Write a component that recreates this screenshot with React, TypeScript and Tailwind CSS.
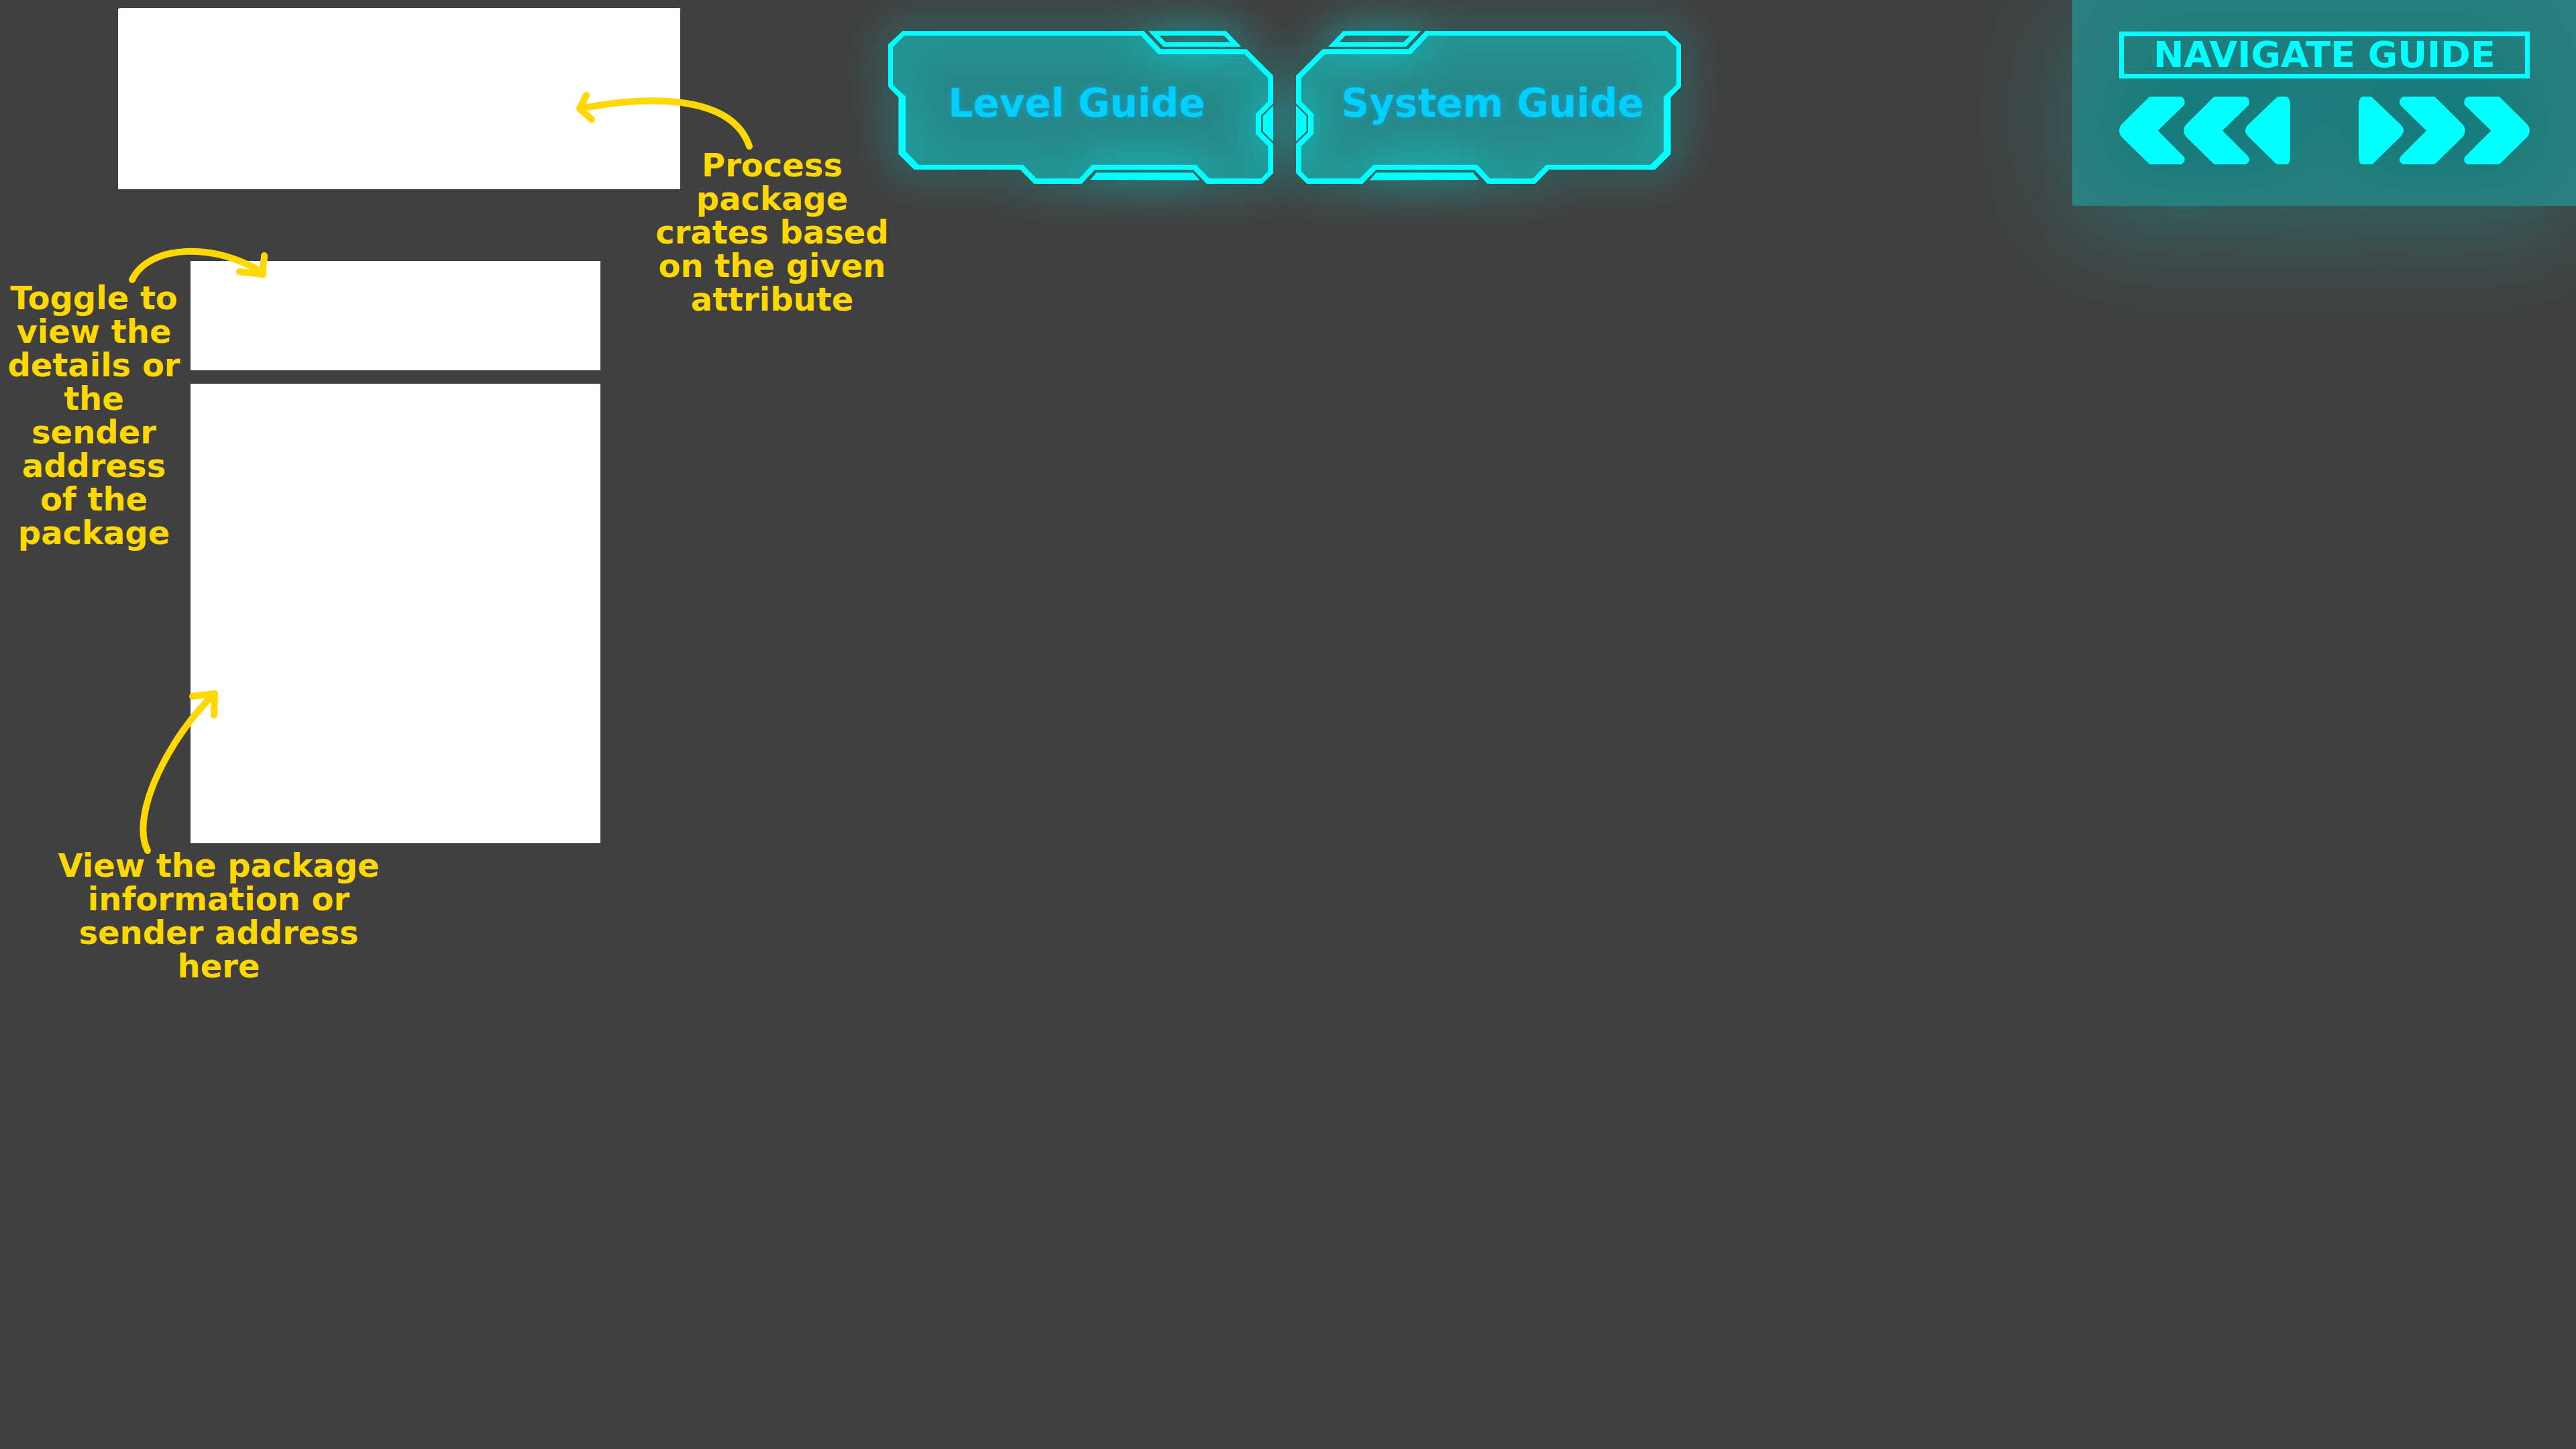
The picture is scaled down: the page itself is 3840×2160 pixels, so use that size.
import React from 'react';

const FONT = "font-['DejaVu_Sans',sans-serif] font-bold";

function Note({ lines, className }: { lines: string[]; className: string }) {
  return (
    <p className={`text-center text-[48px] leading-[50px] text-[#ffd800] ${className}`}>
      {lines.map((line) => (
        <span key={line} className="block whitespace-nowrap">
          {line}{' '}
        </span>
      ))}
    </p>
  );
}

function Arrow({ d, className, viewBox }: { d: string; className: string; viewBox: string }) {
  return (
    <svg
      aria-hidden="true"
      viewBox={viewBox}
      className={`pointer-events-none absolute overflow-visible ${className}`}
      fill="none"
      stroke="#ffd800"
      strokeWidth="10"
      strokeLinecap="round"
      strokeLinejoin="round"
    >
      <path d={d} />
    </svg>
  );
}

const OUTER =
  'M160 137H1040L1103 219H1416L1513 338V461L1469 515V590L1513 642V773L1473 821H1270L1221 759H861L814 821H640L589 757H202L145 688V435L107 387V198Z';
const INNER =
  'M166 159H1030L1094 242H1408L1494 348V452L1449 508V598L1494 654V765L1469 797H1280L1231 736H851L805 797H648L600 736H219L171 677V431L124 379V210Z';

function Frame({ mirrored }: { mirrored?: boolean }) {
  return (
    <span aria-hidden="true" className={`absolute inset-0 ${mirrored ? '-scale-x-100' : ''}`}>
      <svg viewBox="107 137 1406 684" preserveAspectRatio="none" className="absolute inset-0 size-full">
        <path d={OUTER} fill="#00ffff" fillOpacity="0.38" />
      </svg>
      <svg
        viewBox="107 137 1406 684"
        preserveAspectRatio="none"
        className="absolute inset-0 size-full overflow-visible drop-shadow-[0_0_32px_#00ffff]"
        fill="#00ffff"
        fillRule="evenodd"
      >
        <path d={OUTER + INNER} />
        <path d="M1057 138H1341L1396 208H1112ZM1097 159H1333L1356 188H1121Z" />
        <path d="M1513 471L1475 518V586L1513 632Z" />
        <path d="M867 771H1220L1245 805L845 803Z" />
      </svg>
    </span>
  );
}

function GuideButton({ label, mirrored }: { label: string; mirrored?: boolean }) {
  return (
    <button
      type="button"
      className={`relative flex h-[228px] w-[574px] items-center justify-center pb-[12px] ${mirrored ? 'pl-[12px]' : 'pr-[12px]'}`}
    >
      <Frame mirrored={mirrored} />
      <span className="relative text-[58px] leading-[60px] whitespace-nowrap text-[#00cfff] [text-shadow:0_0_8px_#00b4ff99]">
        {label}
      </span>
    </button>
  );
}

const CHEVRON =
  'M220 432H320Q331 440 331 460Q331 467 326 474L246 585L326 698Q331 705 331 713Q331 728 320 736H220L133 615Q124 602 124 585Q124 568 133 555Z';

function NavButton({ label, forward }: { label: string; forward?: boolean }) {
  return (
    <button type="button" aria-label={label} className={forward ? '-scale-x-100' : ''}>
      <svg viewBox="124 432 540 304" preserveAspectRatio="none" className="h-[101px] w-[255px]" fill="#00ffff">
        <path d={CHEVRON} />
        <path d={CHEVRON} transform="translate(204 0)" />
        <path d="M624 432H653Q664 442 664 465V704Q664 728 656 736H621L532 612Q522 598 522 585Q522 572 532 557Z" />
      </svg>
    </button>
  );
}

export default function App() {
  return (
    <main className={`grid min-h-screen grid-cols-[1fr_auto_1fr] items-start overflow-hidden bg-[#404040] ${FONT}`}>
      <section aria-label="Package guide" className="relative flex w-0 items-start">
        <div className="w-[1014px] shrink-0 pt-[12px]">
          <div className="ml-[176px] h-[270px] rounded-tl-[3px] bg-white" />
          <div className="mt-[107px] flex items-start">
            <Note
              className="mr-1 w-[280px] shrink-0 pt-[30px]"
              lines={['Toggle to', 'view the', 'details or', 'the', 'sender', 'address', 'of the', 'package']}
            />
            <div className="flex w-[611px] flex-col gap-5">
              <div className="h-[163px] bg-white" />
              <div className="h-[685px] bg-white" />
            </div>
          </div>
          <Note
            className="mt-2 ml-[76px] w-[500px]"
            lines={['View the package', 'information or', 'sender address', 'here']}
          />
        </div>
        <Note
          className="-ml-[43px] w-[360px] shrink-0 pt-[221px]"
          lines={['Process', 'package', 'crates based', 'on the given', 'attribute']}
        />
        <Arrow
          viewBox="860 140 260 80"
          className="top-[140px] left-[860px] h-[80px] w-[260px]"
          d="M865 162C975 140 1092 144 1117 218M874 142L864 162L882 178"
        />
        <Arrow
          viewBox="190 370 210 50"
          className="top-[370px] left-[190px] h-[50px] w-[210px]"
          d="M197 417C222 364 322 361 392 407M394 381C394 390 391 396 392 409L357 405"
        />
        <Arrow
          viewBox="210 1030 120 240"
          className="top-[1030px] left-[210px] h-[240px] w-[120px]"
          d="M220 1268C192 1212 258 1092 320 1034M287 1038L320 1034L319 1066"
        />
      </section>

      <nav aria-label="Guides" className="flex gap-[34px] pt-[46px] pr-[10px]">
        <GuideButton label="Level Guide" />
        <GuideButton label="System Guide" mirrored />
      </nav>

      <aside className="justify-self-end bg-[#00ffff]/33 pt-[47px] pr-[69px] pb-[62px] pl-[70px] shadow-[0_20px_180px_#00ffff40]">
        <div className="flex w-[612px] flex-col gap-[27px] drop-shadow-[0_0_50px_#007878]">
          <h1 className="flex h-[70px] items-center justify-center border-[7px] border-[#00ffff] text-[54px] leading-[56px] whitespace-nowrap text-[#00ffff]">
            NAVIGATE GUIDE
          </h1>
          <div className="flex justify-between">
            <NavButton label="Previous" />
            <NavButton label="Next" forward />
          </div>
        </div>
      </aside>
    </main>
  );
}
